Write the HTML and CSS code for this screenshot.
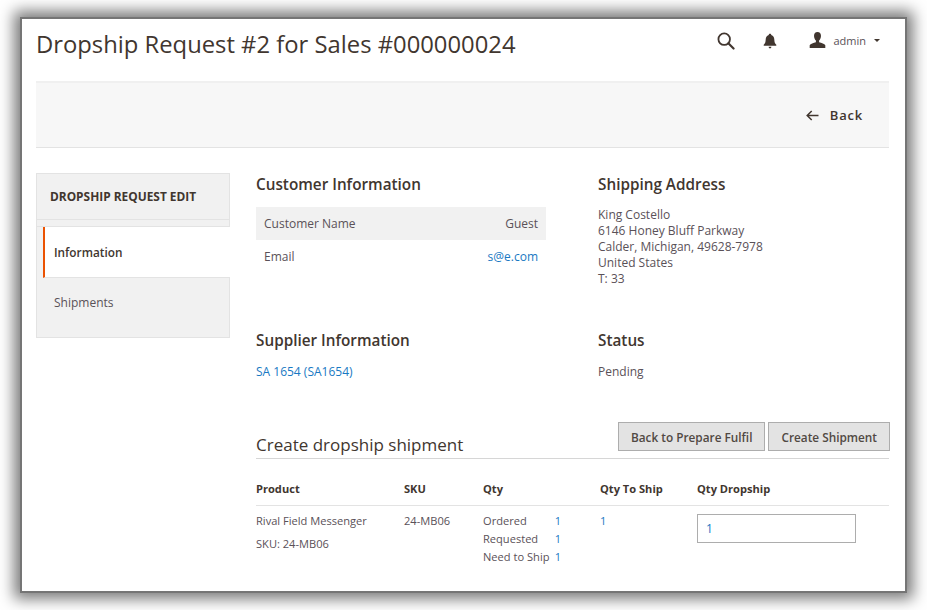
FILE: index.html
```html
<!DOCTYPE html>
<html lang="en">
<head>
<meta charset="utf-8">
<title>Dropship Request #2</title>
<link rel="stylesheet" href="styles.css">
</head>
<body>
<div class="window">
  <header class="topbar">
    <h1 class="page-title">Dropship Request #2 for Sales #000000024</h1>
    <div class="tools">
      <svg class="icon-search" width="18" height="18" viewBox="0 0 20 20"><circle cx="8" cy="8" r="6.4" fill="none" stroke="#41362f" stroke-width="2"/><path d="M12.6 12.6L18.4 18.4" stroke="#41362f" stroke-width="2.4" stroke-linecap="round"/></svg>
      <svg class="icon-bell" width="14" height="16" viewBox="0 0 14 16"><path d="M7 0.8c.8 0 1.2.5 1.3 1.1C10.400 2.500 11.200 4.200 11.300 6.400c.1 2.600.6 4 2 5.400v1H.7v-1c1.400-1.400 1.900-2.800 2-5.400C2.800 4.200 3.600 2.500 5.700 1.900 5.800 1.300 6.200.8 7 .8z" fill="#41362f"/><path d="M5.600 13.800h2.800C8.300 14.900 7.700 15.400 7 15.400s-1.300-.5-1.400-1.600z" fill="#41362f"/></svg>
      <div class="user">
        <svg width="17" height="16" viewBox="0 0 18 17"><path d="M9 0c2.400 0 3.700 1.600 3.700 4 0 2.100-.9 4.200-2 5.100v1.700c2.500.7 5.900 1.500 6.600 3.200V17H.7v-3c.7-1.700 4.100-2.500 6.600-3.200V9.100c-1.100-.9-2-3-2-5.100C5.300 1.600 6.600 0 9 0z" fill="#41362f"/></svg>
        <span class="user-name">admin</span>
        <span class="caret"></span>
      </div>
    </div>
  </header>

  <div class="actions">
    <a class="back">
      <svg width="13" height="11" viewBox="0 0 13 11"><path d="M12.500 5.500H1.500M5.700 1L1.200 5.500 5.700 10" fill="none" stroke="#41362f" stroke-width="1.500"/></svg>
      <span>Back</span>
    </a>
  </div>

  <div class="columns">
    <aside class="sidebar">
      <div class="side-title">DROPSHIP REQUEST EDIT</div>
      <div class="side-strip"></div>
      <div class="side-item active">Information</div>
      <div class="side-item">Shipments</div>
    </aside>

    <main class="main">
      <div class="info-grid">
        <section class="info-block">
          <h2 class="section-title">Customer Information</h2>
          <table class="customer">
            <tr class="shaded"><td>Customer Name</td><td class="right">Guest</td></tr>
            <tr><td>Email</td><td class="right"><a class="link">s@e.com</a></td></tr>
          </table>
        </section>
        <section class="info-block">
          <h2 class="section-title">Shipping Address</h2>
          <address class="address">King Costello<br>6146 Honey Bluff Parkway<br>Calder, Michigan, 49628-7978<br>United States<br>T: 33</address>
        </section>
        <section class="info-block lower">
          <h2 class="section-title">Supplier Information</h2>
          <p class="value"><a class="link">SA 1654 (SA1654)</a></p>
        </section>
        <section class="info-block lower">
          <h2 class="section-title">Status</h2>
          <p class="value">Pending</p>
        </section>
      </div>

      <div class="ship-head">
        <h2 class="ship-title">Create dropship shipment</h2>
        <div class="buttons">
          <button class="btn">Back to Prepare Fulfil</button>
          <button class="btn">Create Shipment</button>
        </div>
      </div>

      <table class="items">
        <thead>
          <tr><th class="c1">Product</th><th class="c2">SKU</th><th class="c3">Qty</th><th class="c4">Qty To Ship</th><th>Qty Dropship</th></tr>
        </thead>
        <tbody>
          <tr>
            <td>
              <div>Rival Field Messenger</div>
              <div class="sku">SKU: 24-MB06</div>
            </td>
            <td>24-MB06</td>
            <td>
              <div class="qty-row"><span>Ordered</span><span class="link">1</span></div>
              <div class="qty-row"><span>Requested</span><span class="link">1</span></div>
              <div class="qty-row"><span>Need to Ship</span><span class="link">1</span></div>
            </td>
            <td><span class="link">1</span></td>
            <td><div class="qty-input link">1</div></td>
          </tr>
        </tbody>
      </table>
    </main>
  </div>
</div>
</body>
</html>
```

FILE: styles.css
```css
* { box-sizing: border-box; }
html, body { margin: 0; height: 100%; background: #fff; overflow: hidden; }
body {
  padding: 17px 20px 0;
  font-family: "Open Sans", "Noto Sans", sans-serif;
  font-size: 12px;
  color: #41362f;
}
.window {
  width: 887px;
  height: 576px;
  background: #fff;
  border: 2px solid #757575;
  box-shadow: 0 0 14px 6px #7a7a7a;
  padding: 0 16px 0 14px;
  overflow: hidden;
}
.topbar {
  display: flex;
  justify-content: space-between;
  height: 62px;
}
.page-title {
  margin: 7px 0 0;
  font-size: 23.800px;
  line-height: 36px;
  font-weight: 400;
  color: #41362f;
}
.tools {
  display: flex;
  align-items: flex-start;
  padding-top: 13px;
  padding-right: 9px;
}
.icon-search { margin-right: 28px; }
.icon-bell { margin: 1px 32px 0 0; }
.user { display: flex; align-items: center; height: 16px; margin-top: 0; }
.user-name { margin-left: 7px; font-size: 11px; color: #5a5158; }
.caret {
  margin-left: 8px;
  border-top: 3px solid #41362f;
  border-left: 3px solid transparent;
  border-right: 3px solid transparent;
}
.actions {
  height: 67px;
  background: #f7f7f7;
  border-top: 2px solid #f0f0f0;
  border-bottom: 1px solid #e3e3e3;
  display: flex;
  align-items: center;
  justify-content: flex-end;
  padding-right: 26px;
}
.back {
  display: flex;
  align-items: center;
  gap: 11px;
  font-size: 13px;
  font-weight: 600;
  letter-spacing: 0.800px;
  color: #41362f;
}
.columns {
  display: flex;
  margin-top: 25px;
}
.sidebar {
  width: 194px;
  height: 165px;
  flex: none;
  background: #f1f1f1;
  border: 1px solid #e3e3e3;
}
.side-title {
  height: 46px;
  padding: 13px 0 0 13px;
  font-size: 11.900px;
  line-height: 18px;
  font-weight: 700;
  color: #41362f;
  border-bottom: 1px solid #e3e3e3;
}
.side-strip { height: 7px; border-bottom: 1px solid #e3e3e3; }
.side-item {
  height: 50px;
  padding: 16px 0 0 17px;
  font-size: 12px;
  line-height: 18px;
  color: #5a5158;
}
.side-item.active {
  height: 51px;
  margin-left: 6px;
  margin-right: -1px;
  padding-left: 9px;
  background: #fff;
  border-left: 2px solid #eb5202;
  border-bottom: 1px solid #e3e3e3;
  color: #41362f;
  font-weight: 600;
  font-size: 11.800px;
}
.main {
  margin-left: 26px;
  width: 633px;
}
.info-grid {
  display: grid;
  grid-template-columns: 290px 291px;
  column-gap: 52px;
}
.info-block { height: 156px; }
.info-block.lower { height: 83px; }
.section-title {
  margin: 0;
  font-size: 15.300px;
  line-height: 22px;
  font-weight: 600;
  color: #41362f;
}
.customer {
  width: 290px;
  margin-top: 12px;
  border-collapse: collapse;
  font-size: 12px;
  color: #5a5158;
}
.customer td { height: 33px; padding: 0 8px; }
.shaded td { background: #f1f1f1; }
.right { text-align: right; }
.link { color: #1979c3; }
.address {
  margin-top: 12px;
  font-style: normal;
  font-size: 12px;
  line-height: 16px;
  color: #5a5158;
}
.value { margin: 12px 0 0; font-size: 12px; line-height: 18px; color: #5a5158; }
.ship-head {
  display: flex;
  justify-content: space-between;
  align-items: flex-end;
  height: 47px;
  border-bottom: 1px solid #d6d6d6;
}
.ship-title {
  margin: 0;
  font-size: 17px;
  line-height: 26px;
  font-weight: 400;
  color: #41362f;
}
.buttons { display: flex; gap: 3px; margin: 0 -1px 7px 0; }
.btn {
  height: 29px;
  padding: 0 12px;
  font-family: inherit;
  font-size: 11.800px;
  font-weight: 600;
  color: #514943;
  background: #e3e3e3;
  border: 1px solid #adadad;
}
.items {
  width: 100%;
  border-collapse: collapse;
  table-layout: fixed;
  font-size: 11.100px;
  color: #5a5158;
}
.items th {
  height: 46px;
  padding: 0 0 7px;
  text-align: left;
  vertical-align: bottom;
  font-weight: 700;
  line-height: 18px;
  color: #41362f;
  border-bottom: 1px solid #e3e3e3;
}
.c1 { width: 148px; }
.c2 { width: 79px; }
.c3 { width: 117px; }
.c4 { width: 97px; }
.items td { padding: 6px 0 0; vertical-align: top; line-height: 18px; }
.sku { margin-top: 5px; }
.qty-row { display: flex; justify-content: space-between; width: 78px; }
.qty-input {
  width: 159px;
  height: 29px;
  margin-top: 2px;
  padding: 0 8px;
  font-size: 12px;
  line-height: 27px;
  border: 1px solid #adadad;
  background: #fff;
}
```
